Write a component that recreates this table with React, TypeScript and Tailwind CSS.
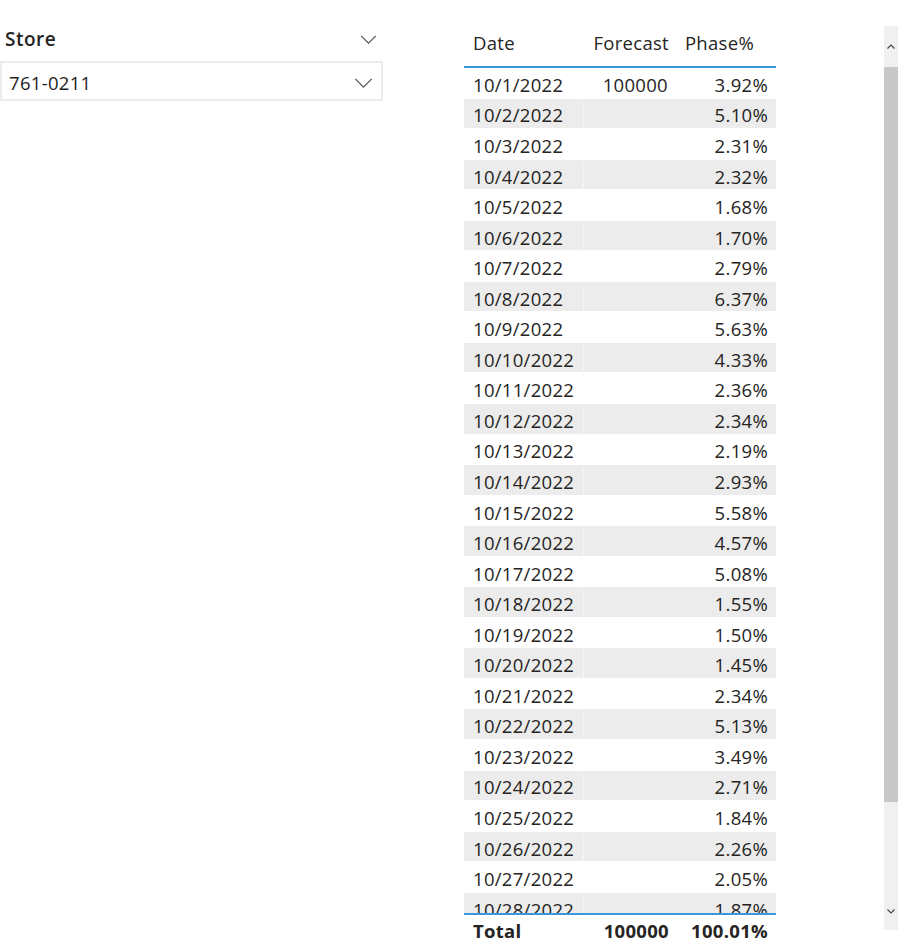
import React from 'react';

const phases = [
  '3.92%', '5.10%', '2.31%', '2.32%', '1.68%', '1.70%', '2.79%', '6.37%', '5.63%', '4.33%',
  '2.36%', '2.34%', '2.19%', '2.93%', '5.58%', '4.57%', '5.08%', '1.55%', '1.50%', '1.45%',
  '2.34%', '5.13%', '3.49%', '2.71%', '1.84%', '2.26%', '2.05%', '1.87%', '2.10%', '2.40%', '2.00%',
];

const Chevron = ({ className }: { className?: string }) => (
  <svg viewBox="0 0 20 11" className={className} fill="none" stroke="#555" strokeWidth="1.4">
    <path d="M1 1l9 9 9-9" />
  </svg>
);

export default function App() {
  return (
    <div
      className="relative h-[952px] w-[920px] bg-white text-[#252423]"
      style={{ fontFamily: '"Open Sans", "Noto Sans", sans-serif' }}
    >
      <div className="flex">
        {/* slicer */}
        <div className="mt-[25px] w-[383px]">
          <div className="flex h-[28px] items-center justify-between pl-[5px] pr-[5px]">
            <span className="text-[19px] font-semibold tracking-[0.5px] text-[#252423]">Store</span>
            <Chevron className="mr-[1px] h-[9px] w-[17px]" />
          </div>
          <div className="mt-[8px] flex h-[40px] items-center justify-between border-2 border-[#ececec] pl-[7px] pr-[8px] pt-[4px]">
            <span className="text-[18.5px] tracking-[0.3px]">761-0211</span>
            <Chevron className="h-[10px] w-[19px]" />
          </div>
        </div>

        {/* table */}
        <div className="ml-[81px] mt-[26px] flex w-[312px] flex-col text-[18.5px] tracking-[0.3px]">
          <div className="flex h-[42px] items-start border-b-2 border-[#3a96dd] pt-[3px]">
            <div className="w-[120px] pl-[9px]">Date</div>
            <div className="w-[93px] pr-[8px] text-right">Forecast</div>
            <div className="w-[99px] pr-[22px] text-right">Phase%</div>
          </div>
          <div className="h-[845px] overflow-hidden">
            {phases.map((p, i) => {
              const odd = i % 2 === 1;
              const divider = odd ? 'border-[#f6f6f6]' : 'border-white';
              return (
                <div
                  key={i}
                  className={`flex h-[30.55px] items-center border-b border-white pt-[4px] ${
                    odd ? 'bg-[#ececec]' : 'bg-white'
                  }`}
                >
                  <div className={`w-[120px] border-r pl-[9px] ${divider}`}>10/{i + 1}/2022</div>
                  <div className={`w-[93px] border-r pr-[8px] text-right ${divider}`}>{i === 0 ? '100000' : ''}</div>
                  <div className="w-[99px] pr-[8px] text-right">{p}</div>
                </div>
              );
            })}
          </div>
          <div className="flex h-[34px] items-center border-t-2 border-[#3a96dd] font-bold">
            <div className="w-[120px] pl-[9px]">Total</div>
            <div className="w-[93px] pr-[8px] text-right">100000</div>
            <div className="w-[99px] pr-[8px] text-right">100.01%</div>
          </div>
        </div>

        {/* scrollbar */}
        <div className="ml-[108px] mt-[26px] flex h-[904px] w-[14px] flex-col bg-[#f0f0f0]">
          <div className="flex h-[41px] items-center justify-center">
            <svg viewBox="0 0 8 5" className="h-[5px] w-[8px]" fill="none" stroke="#444" strokeWidth="1.2">
              <path d="M0.5 4.5L4 1l3.5 3.5" />
            </svg>
          </div>
          <div className="h-[735px] bg-[#c8c8c8]" />
          <div className="flex flex-1 items-end justify-center pb-[16px]">
            <svg viewBox="0 0 8 5" className="h-[5px] w-[8px]" fill="none" stroke="#444" strokeWidth="1.2">
              <path d="M0.5 0.5L4 4l3.5-3.5" />
            </svg>
          </div>
        </div>
      </div>
    </div>
  );
}
